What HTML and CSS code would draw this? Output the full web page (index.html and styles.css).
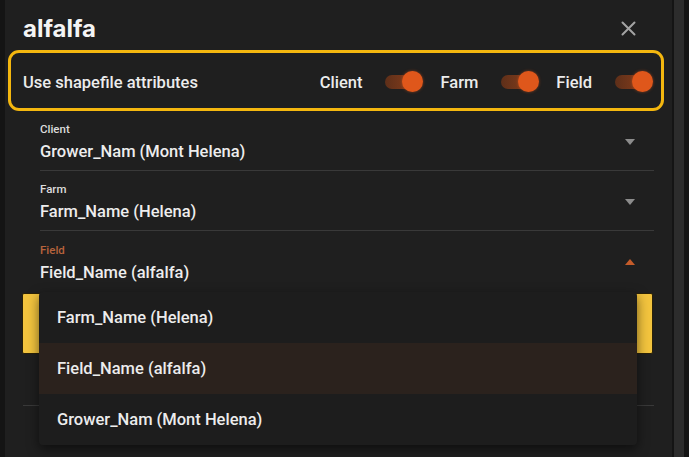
FILE: index.html
```html
<!DOCTYPE html>
<html lang="en">
<head>
    <meta charset="UTF-8">
    <title>alfalfa</title>
    <link rel="stylesheet" href="styles.css">
</head>
<body>
    <div class="page">
        <div class="dialog">
            <div class="dialog-header">
                <h1 class="dialog-title">alfalfa</h1>
                <button class="close-btn" aria-label="Close">
                    <svg width="15" height="15" viewBox="0 0 15 15"><path d="M1.5 1.5 L13.5 13.5 M13.5 1.5 L1.5 13.5" stroke="#a3a3a3" stroke-width="2" stroke-linecap="round"/></svg>
                </button>
            </div>

            <div class="attr-row">
                <span class="attr-title">Use shapefile attributes</span>
                <div class="attr-switches">
                    <span class="switch-label">Client</span>
                    <span class="switch on"><span class="track"></span><span class="thumb"></span></span>
                    <span class="switch-label">Farm</span>
                    <span class="switch on"><span class="track"></span><span class="thumb"></span></span>
                    <span class="switch-label">Field</span>
                    <span class="switch on"><span class="track"></span><span class="thumb"></span></span>
                </div>
            </div>

            <div class="select-field">
                <div class="select-text">
                    <div class="select-label">Client</div>
                    <div class="select-value">Grower_Nam (Mont Helena)</div>
                </div>
                <span class="caret"></span>
            </div>
            <div class="select-field">
                <div class="select-text">
                    <div class="select-label">Farm</div>
                    <div class="select-value">Farm_Name (Helena)</div>
                </div>
                <span class="caret"></span>
            </div>
            <div class="select-field open">
                <div class="select-text">
                    <div class="select-label">Field</div>
                    <div class="select-value">Field_Name (alfalfa)</div>
                </div>
                <span class="caret up"></span>

                <ul class="menu">
                    <li class="menu-item">Farm_Name (Helena)</li>
                    <li class="menu-item selected">Field_Name (alfalfa)</li>
                    <li class="menu-item">Grower_Nam (Mont Helena)</li>
                </ul>
            </div>

            <button class="save-btn" aria-label="Save"></button>
            <div class="footer-line"></div>
        </div>
        <div class="scrollbar"></div>
    </div>
</body>
</html>
```

FILE: styles.css
```css
* {
    box-sizing: border-box;
}

body {
    margin: 0;
    background-color: #141414;
    font-family: Roboto, "Noto Sans", Arial, sans-serif;
    color: #ececec;
    overflow: hidden;
}

.page {
    display: flex;
    height: 457px;
    padding-left: 5px;
}

.dialog {
    width: 667px;
    height: 100%;
    background-color: #1f1f1f;
    padding: 0 18px;
}

.scrollbar {
    width: 10px;
    margin-left: 2px;
    background-color: #2c2c2c;
}

.dialog-header {
    display: flex;
    align-items: center;
    justify-content: space-between;
    padding-top: 15px;
    height: 50px;
    padding-bottom: 8px;
}

.dialog-title {
    margin: 0;
    font-family: Inter, "Noto Sans", Arial, sans-serif;
    font-size: 24px;
    font-weight: 700;
    line-height: 28px;
    color: #f4f4f4;
}

.close-btn {
    background: none;
    border: none;
    padding: 0;
    margin-right: 18px;
    width: 15px;
    height: 15px;
    cursor: pointer;
}

/* highlighted row with the three switches */
.attr-row {
    display: flex;
    align-items: center;
    justify-content: space-between;
    height: 61px;
    margin: 0 -10px 0 -15px;
    padding: 3px 8px 0 12px;
    border: 3px solid #f4b70f;
    border-radius: 11px;
}

.attr-title {
    font-size: 16.5px;
    font-weight: 500;
}

.attr-switches {
    display: flex;
    align-items: center;
}

.switch-label {
    font-size: 16.5px;
    font-weight: 500;
    margin: 0 23px 0 17px;
}

.switch {
    position: relative;
    width: 38px;
    height: 22px;
}

.switch .track {
    position: absolute;
    left: 0;
    top: 4px;
    width: 32px;
    height: 14px;
    border-radius: 7px;
    background: linear-gradient(90deg, #5e2f19, #8a3f1c);
}

.switch .thumb {
    position: absolute;
    right: 0;
    top: 0;
    width: 21px;
    height: 21px;
    border-radius: 50%;
    background-color: #df571b;
    box-shadow: 0 0 3px rgba(223, 87, 27, 0.6);
}

.select-field {
    position: relative;
    display: flex;
    align-items: center;
    justify-content: space-between;
    height: 60px;
    margin-left: 17px;
    padding: 10px 19px 6px 0;
    border-bottom: 1px solid #393939;
}

.select-label {
    font-size: 11.5px;
    font-weight: 500;
    line-height: 14px;
    color: #dcdcdc;
}

.select-value {
    margin-top: 5px;
    font-size: 16.5px;
    font-weight: 500;
    line-height: 22px;
    color: #ededed;
}

.caret {
    width: 0;
    height: 0;
    margin-bottom: 2px;
    border-left: 5px solid transparent;
    border-right: 5px solid transparent;
    border-top: 6px solid #8c8c8c;
}

.caret.up {
    border-top: none;
    border-bottom: 6px solid #c55c2a;
}

.open .select-label {
    color: #b7633c;
}

.open {
    border-bottom: none;
}

/* dropdown list for the open select */
.menu {
    position: absolute;
    top: 61px;
    left: -1px;
    right: 17px;
    z-index: 5;
    margin: 0;
    padding: 0;
    list-style: none;
    background-color: #1d1d1d;
    border-radius: 4px;
    box-shadow: 0 4px 12px rgba(0, 0, 0, 0.55);
}

.menu-item {
    height: 51px;
    padding-left: 18px;
    display: flex;
    align-items: center;
    font-size: 16.5px;
    font-weight: 500;
    color: #ececec;
}

.menu-item.selected {
    background-color: #2b221d;
}

.save-btn {
    display: block;
    width: 100%;
    height: 61px;
    margin-top: 2px;
    margin-left: -1px;
    background-color: #f3c43e;
    border: 1px solid #2a2108;
    border-radius: 2px;
}

.footer-line {
    margin-top: 51px;
    border-top: 1px solid #393939;
}
```
